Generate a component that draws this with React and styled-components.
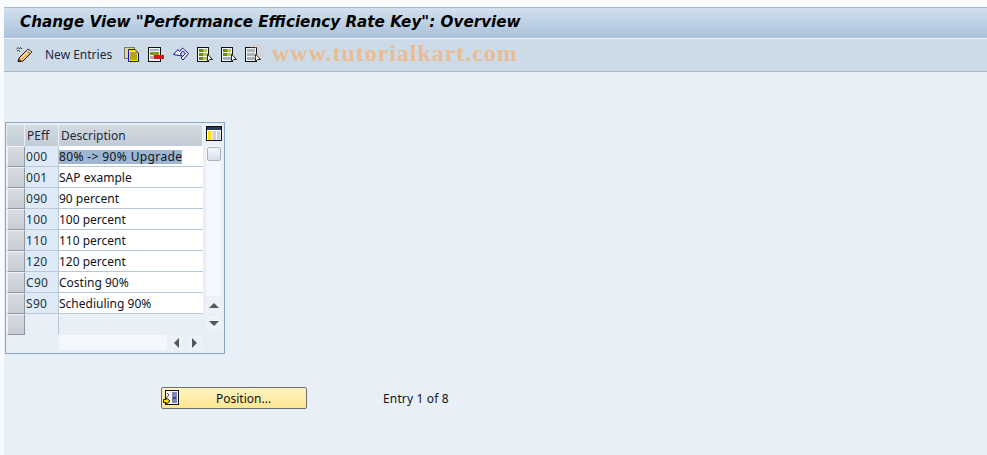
import React from 'react'
import styled, { createGlobalStyle } from 'styled-components'

const rows = [
  ['000', '80% -> 90% Upgrade'],
  ['001', 'SAP example'],
  ['090', '90 percent'],
  ['100', '100 percent'],
  ['110', '110 percent'],
  ['120', '120 percent'],
  ['C90', 'Costing 90%'],
  ['S90', 'Schediuling 90%'],
  ['', ''],
]

function PencilIcon() {
  return (
    <svg width="17" height="16" viewBox="0 0 17 16">
      <path d="M0.5 3 Q2 0.5 3.5 2.5 Q5 0.5 6 3 M1 5 Q3 3.5 4 5.5" stroke="#333" fill="none" />
      <path d="M3 12 L12 3 L16 6 L7 15 L2 16 Z" fill="#f7b860" stroke="#1a1a1a" />
      <path d="M12 3 L16 6 L14.5 7.5 L10.5 4.5 Z" fill="#e8e0d0" stroke="#1a1a1a" strokeWidth="0.6" />
      <path d="M5 12 L12 5.5" stroke="#fff" />
      <path d="M2 16 L3 13 L5.5 15.3 Z" fill="#222" />
    </svg>
  )
}

function CopyIcon() {
  return (
    <svg width="16" height="15" viewBox="0 0 16 15">
      <rect x="0.5" y="0.5" width="10" height="11" fill="#e6d68e" stroke="#7a7a7a" />
      <path d="M4.5 2.5 H11 L14.5 6 V14.5 H4.5 Z" fill="#ffe800" stroke="#10109a" />
      <path d="M6 6 H13 M6 8 H13 M6 10 H13 M6 12 H13" stroke="#6b6420" />
    </svg>
  )
}

function DeleteIcon() {
  return (
    <svg width="16" height="15" viewBox="0 0 16 15">
      <rect x="0.5" y="0.5" width="12" height="14" fill="#eef2f4" stroke="#111" />
      <rect x="2" y="2" width="9" height="2" fill="#a4b2c0" />
      <rect x="2" y="5" width="9" height="3" fill="#7f9a22" />
      <rect x="2" y="9" width="5" height="3" fill="#a4b2c0" />
      <rect x="6" y="8" width="10" height="4" fill="#e0101a" />
    </svg>
  )
}

function UndoIcon() {
  return (
    <svg width="16" height="14" viewBox="0 0 16 14">
      <path
        d="M0.5 7.5 L5 2.5 L6.5 4.5 L9.5 1 L15.5 6.5 L10 13 L8 11 L12.5 6.5 L9.5 4 L7.5 7 L9 9 Z"
        fill="#f4f7fb"
        stroke="#10109a"
        strokeLinejoin="round"
      />
    </svg>
  )
}

function SelectIcon({ bands }) {
  return (
    <svg width="16" height="15" viewBox="0 0 16 15">
      <rect x="0.5" y="0.5" width="11" height="14" fill="#f2f5f7" stroke="#111" />
      {bands.map((c, i) => (
        <g key={i}>
          <rect x="2" y={2 + i * 4} width="8" height="3" fill={c} />
          {c === '#6f8a10' && <rect x="6" y={2 + i * 4} width="4" height="3" fill="#b4c45a" />}
        </g>
      ))}
      <path d="M10.5 7 L10.5 14.5 L12.5 12.5 L15.5 12.5 Z" fill="#fff" stroke="#111" strokeWidth="0.9" />
    </svg>
  )
}

function PositionIcon() {
  return (
    <svg width="16" height="16" viewBox="0 0 16 16">
      <rect x="2.5" y="0.5" width="13" height="14" fill="#f2f4f8" stroke="#111" />
      <rect x="9" y="2" width="5" height="11" fill="#7d86b5" />
      <path d="M10 8 H13" stroke="#111" />
      <path d="M4 3 L6 5 L4 7" stroke="#555" fill="none" />
      <path d="M0.5 9.5 H3 V7.5 L7 11 L3 14.5 V12.5 H0.5 Z" fill="#ffe000" stroke="#111" />
    </svg>
  )
}

function ColumnsIcon() {
  return (
    <svg width="16" height="15" viewBox="0 0 16 15">
      <rect x="0.5" y="0.5" width="15" height="14" fill="#fff" stroke="#111" />
      <rect x="1" y="1" width="14" height="3" fill="#2a3a54" />
      <rect x="2" y="5" width="3.5" height="9" fill="#ffe000" />
      <rect x="6.5" y="5" width="3.5" height="9" fill="#c9d2dc" />
      <rect x="11" y="5" width="3.5" height="9" fill="#c9d2dc" />
    </svg>
  )
}

function App() {
  return (
    <Page>
      <GlobalStyle />
      <Main>
        <TitleBar>
          <Title>Change View "Performance Efficiency Rate Key": Overview</Title>
        </TitleBar>
        <Toolbar>
          <PencilIcon />
          <ToolLabel>New Entries</ToolLabel>
          <ToolIcons>
            <CopyIcon />
            <DeleteIcon />
            <UndoIcon />
            <SelectIcon bands={['#6f8a10', '#6f8a10', '#6f8a10']} />
            <SelectIcon bands={['#6f8a10', '#6f8a10', '#a4b2c0']} />
            <SelectIcon bands={['#a4b2c0', '#a4b2c0', '#a4b2c0']} />
          </ToolIcons>
          <WatermarkRing>©</WatermarkRing>
          <Watermark>www.tutorialkart.com</Watermark>
        </Toolbar>
        <Content>
          <TableFrame>
            <HeaderRow>
              <HeaderCorner />
              <HeaderCell>PEff</HeaderCell>
              <HeaderCell>Description</HeaderCell>
              <ColumnsButton>
                <ColumnsIcon />
              </ColumnsButton>
            </HeaderRow>
            <BodyWrap>
              <Rows>
                {rows.map((row, i) => (
                  <Row key={i}>
                    <RowSelector />
                    <KeyCell $empty={i === rows.length - 1}>{row[0]}</KeyCell>
                    <DescCell $empty={i === rows.length - 1}>
                      {i === 0 ? <Selected>{row[1]}</Selected> : row[1]}
                    </DescCell>
                  </Row>
                ))}
              </Rows>
              <VScroll>
                <ScrollTrack>
                  <ScrollThumb />
                </ScrollTrack>
                <ScrollButton><ArrowUp /></ScrollButton>
                <ScrollButton><ArrowDown /></ScrollButton>
              </VScroll>
            </BodyWrap>
            <HScroll>
              <HTrack />
              <HButton><ArrowLeft /></HButton>
              <HButton><ArrowRight /></HButton>
            </HScroll>
          </TableFrame>
          <ActionRow>
            <PositionButton>
              <PositionIcon />
              <span>Position...</span>
            </PositionButton>
            <EntryText>Entry 1 of 8</EntryText>
          </ActionRow>
        </Content>
      </Main>
    </Page>
  )
}

export default App

const GlobalStyle = createGlobalStyle`
  html, body {
    margin: 0;
    padding: 0;
    height: 100%;
    background: #f9fbfe;
  }
  #root {
    height: 100%;
  }
`

const Page = styled.div`
  width: 987px;
  height: 455px;
  padding: 7px 0 0 4px;
  box-sizing: border-box;
  overflow: hidden;
  font-family: "Noto Sans", "Open Sans", sans-serif;
  font-size: 12px;
  color: #10141c;
`

const Main = styled.div`
  height: 448px;
  background: #e8eff7;
  display: flex;
  flex-direction: column;
`

const TitleBar = styled.div`
  height: 28px;
  padding: 0 0 2px 16px;
  border-top: 1px solid #a9b6c6;
  border-bottom: 1px solid #eef3f8;
  background: linear-gradient(#d2e0ee, #a9c1d9);
  display: flex;
  align-items: center;
`

const Title = styled.h1`
  margin: 0;
  font-family: "DejaVu Sans", sans-serif;
  font-size: 15.2px;
  font-weight: bold;
  font-style: italic;
  color: #000;
  white-space: nowrap;
`

const Toolbar = styled.div`
  position: relative;
  height: 30px;
  padding: 0 0 2px 12px;
  background: #cddbe8;
  border-bottom: 1px solid #a9b6c6;
  display: flex;
  align-items: center;
`

const ToolLabel = styled.span`
  margin-left: 12px;
  color: #1a2a44;
`

const ToolIcons = styled.div`
  display: flex;
  align-items: center;
  gap: 8.2px;
  margin-left: 12px;
`

const Watermark = styled.span`
  position: absolute;
  left: 268px;
  top: 0;
  line-height: 29px;
  font-family: "Liberation Serif", serif;
  font-size: 24px;
  font-weight: bold;
  letter-spacing: 0.95px;
  color: #e8bd92;
  white-space: nowrap;
`

const WatermarkRing = styled.span`
  position: absolute;
  left: 245px;
  top: 1px;
  font-family: "Liberation Serif", serif;
  font-size: 19px;
  line-height: 24px;
  color: #e8bd92;
  opacity: 0.6;
`

const Content = styled.div`
  flex: 1;
  padding: 50px 0 0 1px;
`

const TableFrame = styled.div`
  width: 220px;
  height: 232px;
  box-sizing: border-box;
  border: 1px solid #8ba6c1;
  padding: 2px 1px 0 1px;
`

const HeaderRow = styled.div`
  display: grid;
  grid-template-columns: 18px 34px 144px 19px;
  height: 21px;
`

const HeaderCorner = styled.div`
  background: linear-gradient(#d3dae1, #c3ccd5);
  border-right: 1px solid #e8eff7;
`

const HeaderCell = styled.div`
  background: linear-gradient(#d3dae1, #c2cbd4);
  border-right: 1px solid #e8eff7;
  padding-left: 2px;
  line-height: 21px;
  color: #1a2a44;
`

const ColumnsButton = styled.div`
  display: flex;
  align-items: flex-start;
  justify-content: flex-end;
  padding-top: 1px;
`

const BodyWrap = styled.div`
  display: flex;
`

const Rows = styled.div`
  width: 196px;
`

const Row = styled.div`
  display: grid;
  grid-template-columns: 18px 34px 144px;
  height: 21px;
`

const RowSelector = styled.div`
  background: linear-gradient(#d9dde2, #c6ccd3);
  border: 1px solid #f0f3f7;
  border-right: 1px solid #8d99a6;
  border-bottom: 1px solid #8d99a6;
  box-sizing: border-box;
`

const KeyCell = styled.div`
  background: ${(p) => (p.$empty ? 'transparent' : '#deebf6')};
  border-bottom: ${(p) => (p.$empty ? 'none' : '1px solid #b9c8d8')};
  border-right: 1px solid #b9c8d8;
  height: 20px;
  padding-left: 1px;
  line-height: 22px;
  letter-spacing: 0.3px;
  color: #243244;
`

const DescCell = styled.div`
  background: ${(p) => (p.$empty ? 'transparent' : '#fff')};
  border-bottom: ${(p) => (p.$empty ? 'none' : '1px solid #b9c8d8')};
  height: 20px;
  line-height: 22px;
  white-space: nowrap;
`

const Selected = styled.span`
  background: #9db6d2;
  display: inline-block;
  line-height: 14px;
  letter-spacing: 0.38px;
`

const VScroll = styled.div`
  width: 19px;
  height: 188px;
  display: flex;
  flex-direction: column;
  align-items: flex-end;
  padding-right: 1px;
  box-sizing: border-box;
`

const ScrollTrack = styled.div`
  flex: 1;
  width: 15px;
  margin-bottom: 2px;
  background: #f4f7fb;
`

const ScrollThumb = styled.div`
  width: 14px;
  height: 14px;
  margin: 1px 0 0 1px;
  box-sizing: border-box;
  border: 1px solid #a8b4c2;
  border-radius: 2px;
  background: linear-gradient(#f4f7fb, #d6e0ea);
`

const ScrollButton = styled.div`
  width: 15px;
  height: 15px;
  margin-bottom: 3px;
  background: #eef2f7;
  display: flex;
  align-items: center;
  justify-content: center;
`

const ArrowUp = styled.div`
  border: 5px solid transparent;
  border-top: none;
  border-bottom-color: #4c5866;
`

const ArrowDown = styled(ArrowUp)`
  transform: rotate(180deg);
`

const HScroll = styled.div`
  display: flex;
  align-items: center;
  height: 15px;
  padding-left: 52px;
`

const HTrack = styled.div`
  width: 108px;
  height: 15px;
  margin-right: 2px;
  background: #f4f7fb;
`

const HButton = styled.div`
  width: 15px;
  height: 15px;
  margin-right: 3px;
  background: #eef2f7;
  display: flex;
  align-items: center;
  justify-content: center;
`

const ArrowLeft = styled.div`
  border: 5px solid transparent;
  border-left: none;
  border-right-color: #4c5866;
`

const ArrowRight = styled(ArrowLeft)`
  transform: rotate(180deg);
`

const ActionRow = styled.div`
  display: flex;
  align-items: center;
  margin-top: 33px;
  padding-left: 156px;
`

const PositionButton = styled.div`
  width: 146px;
  height: 22px;
  box-sizing: border-box;
  border: 1px solid #6e6e6e;
  border-radius: 2px;
  background: linear-gradient(#fff3c4, #ffe68f);
  display: flex;
  align-items: center;
  padding-left: 1px;
  color: #111;

  span {
    margin-left: 37px;
  }
`

const EntryText = styled.span`
  margin-left: 76px;
  letter-spacing: 0.15px;
  color: #10141c;
`
